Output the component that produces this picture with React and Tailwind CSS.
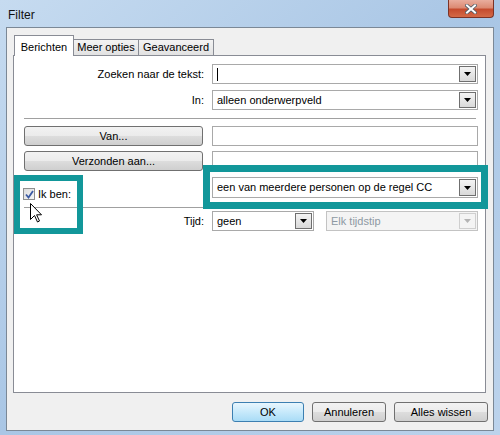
import React from "react";

function Tri({ disabled }) {
  return (
    <svg width="7" height="4" viewBox="0 0 7 4">
      <path d="M0 0h7L3.5 4z" fill={disabled ? "#b4b4b4" : "#000"} />
    </svg>
  );
}

function Combo({ text, width = "w-[266px]", height = "h-[20px]", disabled, caret }) {
  return (
    <div
      className={`${width} ${height} flex items-stretch border p-[1px] ${
        disabled ? "border-[#c3c3c3] bg-[#f4f4f4]" : "border-[#a9a9a9] bg-white"
      }`}
    >
      <div
        className={`flex flex-1 items-center overflow-hidden whitespace-nowrap pl-[3px] ${
          disabled ? "text-[#8e99a3]" : "text-black"
        }`}
      >
        {caret && <span className="h-[13px] w-px bg-black" />}
        {text}
      </div>
      <div
        className={`flex w-[17px] items-center justify-center border ${
          disabled
            ? "border-[#cfcfcf] bg-[#f4f4f4]"
            : "border-[#6f6f6f] bg-gradient-to-b from-[#f4f4f4] to-[#d9d9d9]"
        }`}
      >
        <Tri disabled={disabled} />
      </div>
    </div>
  );
}

function Field() {
  return <div className="h-[20px] w-[266px] border border-[#a9a9a9] bg-white" />;
}

function WinButton({ children, width, focused }) {
  return (
    <div
      className={`${width} flex h-[20px] items-center justify-center rounded-[3px] border ${
        focused
          ? "border-[#3c7fb1] bg-gradient-to-b from-[#e8f6fd] via-[#c7e9fb] to-[#a9dcf6]"
          : "border-[#707070] bg-[linear-gradient(#f2f2f2_0%,#ebebeb_50%,#dddddd_51%,#cfcfcf_100%)]"
      }`}
    >
      {children}
    </div>
  );
}

function Tab({ label, width, active }) {
  if (active) {
    return (
      <div
        className={`${width} relative z-10 -mb-px flex h-[21px] justify-center border border-b-0 border-[#898c95] bg-white pt-[3px]`}
      >
        {label}
      </div>
    );
  }
  return (
    <div
      className={`${width} flex h-[16px] items-start justify-center border-t border-r border-[#898c95] bg-gradient-to-b from-[#f3f3f3] to-[#e2e2e2] pt-[0px] leading-[14px]`}
    >
      {label}
    </div>
  );
}

function Cursor() {
  return (
    <svg width="13" height="20" viewBox="0 0 13 20" className="absolute left-[30px] top-[203px]">
      <path
        d="M0.5 0.5V16.5L4.5 12.5L7.5 19L9.5 18L6.6 11.8H11.5Z"
        fill="#fff"
        stroke="#000"
        strokeWidth="1"
        strokeLinejoin="miter"
      />
    </svg>
  );
}

export default function App() {
  return (
    <div className="relative h-[435px] w-[500px] overflow-hidden bg-gradient-to-br from-[#c6dbf0] via-[#a9c6e5] to-[#bcd3ec] font-['Liberation_Sans',Arial,sans-serif] text-[11px] text-black">
      {/* title bar */}
      <div className="flex h-[27px] items-start justify-between">
        <span className="pl-[8px] pt-[6px] text-[12px] text-[#111]">Filter</span>
        <div className="mr-[6px] flex h-[18px] w-[46px] items-center justify-center rounded-b-[4px] border border-t-0 border-[#7c3326] bg-[linear-gradient(#e9ad9d_0%,#dc8a73_45%,#c54b2e_55%,#d46a47_100%)]">
          <svg width="12" height="10" viewBox="0 0 12 10">
            <path d="M2 1.5L10 8.5M10 1.5L2 8.5" stroke="#4f5b66" strokeWidth="3.6" strokeLinecap="square" />
            <path d="M2 1.5L10 8.5M10 1.5L2 8.5" stroke="#fff" strokeWidth="2" strokeLinecap="square" />
          </svg>
        </div>
      </div>

      {/* client area */}
      <div className="ml-[6px] h-[404px] w-[488px] border border-[#7b8896] bg-[#f0f0f0]">
        <div className="flex h-[27px] items-end pl-[7px]">
          <Tab label="Berichten" width="w-[60px]" active />
          <Tab label="Meer opties" width="w-[65px]" />
          <Tab label="Geavanceerd" width="w-[75px]" />
        </div>

        <div className="ml-[6px] flex h-[338px] w-[473px] flex-col border border-[#898c95] bg-white pl-[10px]">
          <div className="mt-[8px] flex h-[20px] items-center gap-[8px]">
            <div className="w-[180px] text-right">Zoeken naar de tekst:</div>
            <Combo text="" caret />
          </div>
          <div className="mt-[6px] flex h-[20px] items-center gap-[8px]">
            <div className="w-[180px] text-right">In:</div>
            <Combo text="alleen onderwerpveld" />
          </div>
          <div className="mt-[8px] h-px w-[452px] bg-[#a0a0a0]" />
          <div className="mt-[7px] flex h-[20px] items-center gap-[9px]">
            <WinButton width="w-[179px]">Van...</WinButton>
            <Field />
          </div>
          <div className="mt-[5px] flex h-[20px] items-center gap-[9px]">
            <WinButton width="w-[179px]">Verzonden aan...</WinButton>
            <Field />
          </div>
          <div className="mt-[6px] flex h-[21px] items-start gap-[8px]">
            <div className="-ml-px mt-[9px] flex w-[181px] items-center gap-[3px]">
              <span className="flex h-[12px] w-[12px] items-center justify-center border border-[#8e8f8f] bg-gradient-to-br from-[#dcdcdc] to-[#f6f6f6]">
                <svg width="9" height="9" viewBox="0 0 9 9">
                  <path d="M1 4.5L3.5 7.5L8 1" fill="none" stroke="#3b5aa3" strokeWidth="1.8" />
                </svg>
              </span>
              <span>Ik ben:</span>
            </div>
            <Combo text="een van meerdere personen op de regel CC" height="h-[21px]" />
          </div>
          <div className="mt-[9px] h-px w-[452px] bg-[#a0a0a0]" />
          <div className="mt-[3px] flex h-[20px] items-center gap-[8px]">
            <div className="w-[180px] text-right">Tijd:</div>
            <Combo text="geen" width="w-[102px]" />
            <div className="ml-[4px]">
              <Combo text="Elk tijdstip" width="w-[152px]" disabled />
            </div>
          </div>
        </div>

        <div className="mt-[9px] flex justify-end gap-[8px] pr-[5px]">
          <WinButton width="w-[72px]" focused>OK</WinButton>
          <WinButton width="w-[74px]">Annuleren</WinButton>
          <WinButton width="w-[94px]">Alles wissen</WinButton>
        </div>
      </div>

      {/* annotation boxes */}
      <div className="absolute left-[203px] top-[165px] h-[44px] w-[285px] border-[7px] border-[#12979a]" />
      <div className="absolute left-[14px] top-[175px] h-[59px] w-[69px] border-[6px] border-[#12979a]" />
      <Cursor />
    </div>
  );
}
